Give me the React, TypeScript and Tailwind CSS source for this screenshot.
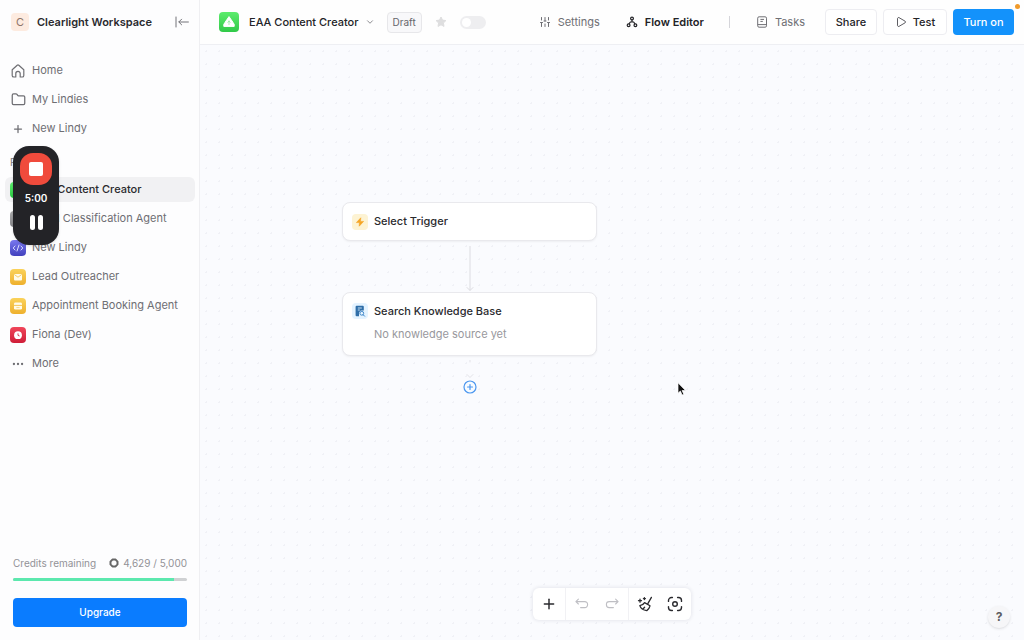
import type { ReactNode } from "react";
import { ChevronDown, Ellipsis, Folder, Play, Plus } from "lucide-react";

type Agent = { name: string; icon: ReactNode; tile: string; active?: boolean };

const agents: Agent[] = [
  {
    name: "EAA Content Creator",
    icon: <PyramidGlyph />,
    tile: "bg-linear-to-b from-[#5ff071] to-[#26c940]",
    active: true,
  },
  { name: "Email Classification Agent", icon: null, tile: "bg-linear-to-b from-[#a9a9ab] to-[#858588]" },
  { name: "New Lindy", icon: <CodeGlyph />, tile: "bg-linear-to-b from-[#7a78f0] to-[#4240bd]" },
  { name: "Lead Outreacher", icon: <MailGlyph />, tile: "bg-linear-to-b from-[#fad25a] to-[#eeb02c]" },
  {
    name: "Appointment Booking Agent",
    icon: <CalendarGlyph />,
    tile: "bg-linear-to-b from-[#fad25a] to-[#eeb02c]",
  },
  { name: "Fiona (Dev)", icon: <ClockGlyph />, tile: "bg-linear-to-b from-[#f0455a] to-[#cf1c38]" },
];

function PyramidGlyph() {
  return (
    <svg viewBox="0 0 20 20" className="size-full">
      <path d="M10 4.6 14 10.4 15.2 12.4V14.4H4.8V12.4L6 10.4Z" fill="#fff" stroke="#fff" strokeLinejoin="round" />
      <path d="M10 8.4v4.6M8.6 10.6 10 9l1.4 1.6" fill="none" stroke="#8eea99" strokeWidth="0.8" />
    </svg>
  );
}

function CodeGlyph() {
  return (
    <svg viewBox="0 0 16 16" className="size-full" fill="none" stroke="#dcdcff" strokeLinecap="round">
      <path d="M5 6 3.2 8 5 10M11 6l1.8 2L11 10M9 5l-2 6" />
    </svg>
  );
}

function MailGlyph() {
  return (
    <svg viewBox="0 0 16 16" className="size-full">
      <rect x="4" y="5" width="8" height="6.4" rx="1" fill="#fffbe9" />
      <path d="m4.4 5.6 3.6 2.6 3.6-2.6" fill="none" stroke="#f2bf45" strokeWidth="0.8" />
    </svg>
  );
}

function CalendarGlyph() {
  return (
    <svg viewBox="0 0 16 16" className="size-full">
      <rect x="4" y="4.6" width="8" height="7" rx="1.4" fill="#fffbe9" />
      <path d="M4 7.4h8" stroke="#f2bf45" strokeWidth="0.9" />
      <path d="M6.4 9.6h3.2" stroke="#f6cf6f" strokeWidth="0.8" />
    </svg>
  );
}

function ClockGlyph() {
  return (
    <svg viewBox="0 0 16 16" className="size-full">
      <circle cx="8" cy="8.2" r="3.9" fill="#fff" />
      <path d="M8 6.4v2l1.6.6" fill="none" stroke="#d42a45" strokeWidth="0.9" />
    </svg>
  );
}

function HomeIcon() {
  return (
    <svg viewBox="0 0 14 14" className="size-3.5" fill="none" stroke="currentColor" strokeWidth="1.2" strokeLinejoin="round">
      <path d="M1.2 5.8 6.2 1.3a1.2 1.2 0 0 1 1.6 0l5 4.5v5.6a1.6 1.6 0 0 1-1.6 1.6H9.2V9.6a2.2 2.2 0 0 0-4.4 0V13h-2a1.6 1.6 0 0 1-1.6-1.6Z" />
    </svg>
  );
}

function CollapseIcon() {
  return (
    <svg viewBox="0 0 14 12" className="h-3 w-3.5" fill="none" stroke="currentColor" strokeLinecap="round" strokeLinejoin="round">
      <path d="M1 1v10M13.4 6H4M6.6 3.2 3.8 6l2.8 2.8" />
    </svg>
  );
}

function CoinIcon() {
  return (
    <svg viewBox="0 0 10 10" className="size-2.5" fill="none">
      <path d="M3.4 1.6h3.2l1.9 2v2.8l-1.9 2H3.4l-1.9-2V3.600Z" stroke="#666" strokeWidth="2" strokeLinejoin="round" />
    </svg>
  );
}

function SlidersIcon() {
  return (
    <svg viewBox="0 0 12 12" className="size-3" fill="none" stroke="currentColor" strokeLinecap="round">
      <path d="M2.5 1.500v2.500M2.500 7v3.500M6 1.500V5M6 8v2.500M9.500 1.500V4M9.500 7v3.500M1.500 6.500h2M5 5h2M8.500 6.500h2" />
    </svg>
  );
}

function FlowIcon() {
  return (
    <svg viewBox="0 0 12 12" className="size-3" fill="none" stroke="currentColor" strokeWidth="1.2">
      <circle cx="6" cy="2.500" r="1.400" />
      <circle cx="2.600" cy="9.300" r="1.400" />
      <circle cx="9.400" cy="9.300" r="1.400" />
      <path d="M6 3.900v1.700M3 7.900 4.400 6h3.200L9 7.900" />
    </svg>
  );
}

function TasksIcon() {
  return (
    <svg viewBox="0 0 12 12" className="size-3" fill="none" stroke="currentColor">
      <rect x="1.7" y="0.8" width="8.8" height="10.4" rx="1.4" />
      <path d="M1.7 8.6h8.800M4.400 3.400h3.600M4.400 5.400h2.400" />
    </svg>
  );
}

function StarIcon() {
  return (
    <svg viewBox="0 0 12 12" className="size-3">
      <path
        d="m6 1 1.5 3.1 3.4.5-2.500 2.400.6 3.400L6 8.800l-3 1.600.6-3.400L1.100 4.600l3.400-.5Z"
        fill="#dededf"
        stroke="#dededf"
        strokeLinejoin="round"
      />
    </svg>
  );
}

function BoltIcon() {
  return (
    <svg viewBox="0 0 10 10" className="size-2.5">
      <path
        d="M5.800.8 1.400 5.600h3L4.200 9.200l4.400-4.800H5.500Z"
        fill="#f5a524"
        stroke="#f5a524"
        strokeWidth="0.6"
        strokeLinejoin="round"
      />
    </svg>
  );
}

function KnowledgeIcon() {
  return (
    <svg viewBox="0 0 12 12" className="size-3">
      <path
        d="M2.600.8h6.200a1 1 0 0 1 1 1v3.600H6.800L5 7.400v3.800H2.600a1 1 0 0 1-1-1V1.800a1 1 0 0 1 1-1Z"
        fill="#2f6ea8"
      />
      <path d="M3.800 3h4M3.800 5h2" stroke="#d6ebfb" strokeWidth="0.9" />
      <circle cx="7.800" cy="8.300" r="1.900" fill="#e8f5ff" stroke="#2f7dc4" strokeWidth="0.9" />
      <path d="m9.200 9.800 1.400 1.400" stroke="#2f7dc4" strokeLinecap="round" />
    </svg>
  );
}

function UndoIcon() {
  return (
    <svg viewBox="0 0 14 14" className="size-3.5" fill="none" stroke="currentColor" strokeWidth="1.1" strokeLinecap="round" strokeLinejoin="round">
      <path d="M3.400 2.200.9 4.600l2.500 2.400M1 4.600h8.800a2.800 2.800 0 0 1 2.800 2.800v.4a2.800 2.800 0 0 1-2.800 2.800H5.600" />
    </svg>
  );
}

function RedoIcon() {
  return (
    <svg viewBox="0 0 14 14" className="size-3.5" fill="none" stroke="currentColor" strokeWidth="1.1" strokeLinecap="round" strokeLinejoin="round">
      <path d="m10.600 2.200 2.500 2.400L10.600 7M13 4.600H4.200a2.800 2.800 0 0 0-2.800 2.800v.4a2.800 2.800 0 0 0 2.800 2.800h4.200" />
    </svg>
  );
}

function BroomIcon() {
  return (
    <svg viewBox="0 0 16 16" className="size-4" fill="none" stroke="currentColor" strokeWidth="1.3" strokeLinecap="round" strokeLinejoin="round">
      <path d="M14.400 1.400 11 7.400M7.600 6.600l5.400 3.200M7.600 6.600C6.400 8.600 4.600 9.400 2.800 9.600c.8 2.400 3.600 4.600 7 5 1.600-1 2.700-2.800 3.200-4.800M6 13l1.600-1.800" />
      <path d="M3 3.200v3M1.500 4.700h3M7.400 1.600v2M6.400 2.600h2" />
    </svg>
  );
}

function FocusIcon() {
  return (
    <svg viewBox="0 0 16 16" className="size-4" fill="none" stroke="currentColor" strokeWidth="1.4" strokeLinecap="round">
      <path d="M1.500 5.400V4.500a3 3 0 0 1 3-3h.9M10.600 1.500h.9a3 3 0 0 1 3 3v.9M14.500 10.600v.9a3 3 0 0 1-3 3h-.9M5.400 14.500h-.9a3 3 0 0 1-3-3v-.9" />
      <circle cx="8" cy="8" r="2.300" />
    </svg>
  );
}

function NavLink({ icon, label }: { icon: ReactNode; label: string }) {
  return (
    <a href="#" className="flex h-[25px] items-center gap-1.5 rounded px-[5px] text-[#6e6e73]">
      <span className="flex w-4 justify-center">{icon}</span>
      {label}
    </a>
  );
}

function Sidebar() {
  return (
    <aside className="flex w-[200px] shrink-0 flex-col border-r border-[#efeff2] bg-[#fdfdfe]">
      <div className="flex h-11 items-center gap-2 pr-2.5 pl-[11px]">
        <span className="flex size-[18px] items-center justify-center rounded bg-[#fdebe0] text-[11px] text-[#8d7468]">
          C
        </span>
        <span className="flex-1 text-[11px] font-semibold whitespace-nowrap text-[#2a2a2e]">Clearlight Workspace</span>
        <button aria-label="Collapse sidebar" className="text-[#737378]">
          <CollapseIcon />
        </button>
      </div>

      <nav className="mt-3.5 flex flex-col gap-1 pr-1 pl-[5px] text-[11px]">
        <NavLink icon={<HomeIcon />} label="Home" />
        <NavLink icon={<Folder className="size-[15px]" strokeWidth={2} />} label="My Lindies" />
        <NavLink icon={<Plus className="size-3" strokeWidth={2.5} />} label="New Lindy" />

        <h2 className="mt-1.5 flex h-[22px] items-center px-[5px] text-[10px] text-[#7d7d82]">Favorites</h2>
        {agents.map((a) => (
          <a
            key={a.name}
            href="#"
            className={
              a.active
                ? "flex h-[25px] items-center gap-1.5 rounded-md bg-[#f1f1f3] px-[5px] font-medium whitespace-nowrap text-[#2a2a2e]"
                : "flex h-[25px] items-center gap-1.5 rounded-md px-[5px] whitespace-nowrap text-[#6e6e73]"
            }
          >
            <span className={`size-4 shrink-0 overflow-hidden rounded ${a.tile}`}>{a.icon}</span>
            {a.name}
          </a>
        ))}
        <NavLink icon={<Ellipsis className="size-3.5" strokeWidth={2} />} label="More" />
      </nav>

      <div className="mt-auto pr-3 pb-[13px] pl-[13px]">
        <div className="flex items-center justify-between text-[10px] leading-4 text-[#929297]">
          <span>Credits remaining</span>
          <span className="flex items-center gap-1">
            <CoinIcon />
            4,629 / 5,000
          </span>
        </div>
        <div className="mt-[7px] h-[3px] overflow-hidden rounded-full bg-[#cfd1d3]">
          <div className="h-full bg-[#5ce8ae]" style={{ width: `${(4629 / 5000) * 100}%` }} />
        </div>
        <button className="mt-[17px] h-[29px] w-full rounded bg-[#0a7cff] text-[10px] font-medium text-white">
          Upgrade
        </button>
      </div>
    </aside>
  );
}

function Header() {
  return (
    <header className="flex h-[45px] items-center border-b border-[#eeeff3] bg-[#fefefe] pr-2.5 pl-[19px] text-[11px] whitespace-nowrap">
      <span className="size-5 shrink-0 overflow-hidden rounded bg-linear-to-b from-[#5cec6d] to-[#30c948]">
        <PyramidGlyph />
      </span>
      <button className="ml-2.5 flex items-center gap-1.5 font-medium text-[#232327]">
        EAA Content Creator
        <ChevronDown className="size-2.5 text-[#77777c]" />
      </button>
      <span className="ml-3 flex h-[21px] items-center rounded border border-[#e7e7ea] bg-[#f8f8fa] px-[5px] text-[10px] text-[#66666b]">
        Draft
      </span>
      <button aria-label="Favorite" className="ml-[13px]">
        <StarIcon />
      </button>
      <label className="ml-[13px] flex">
        <input type="checkbox" role="switch" aria-label="Enabled" className="peer sr-only" />
        <span className="flex h-[13px] w-[26px] items-center rounded-full bg-[#eeeef0] p-0.5">
          <span className="size-[9px] rounded-full bg-white" />
        </span>
      </label>

      <nav className="ml-auto flex items-center text-[#6f6f74]">
        <a href="#" className="flex items-center gap-[7px]">
          <SlidersIcon />
          Settings
        </a>
        <a href="#" className="ml-[26px] flex items-center gap-[7px] font-semibold text-[#232327]">
          <FlowIcon />
          Flow Editor
        </a>
        <span className="ml-[25px] h-3 w-px bg-[#d5d5da]" />
        <a href="#" className="ml-[26px] flex items-center gap-[7px]">
          <TasksIcon />
          Tasks
        </a>
      </nav>
      <div className="ml-5 flex gap-1.5 font-medium text-[#232327]">
        <button className="h-[26px] w-[52px] rounded border border-[#ededf1] bg-white">Share</button>
        <button className="flex h-[26px] w-16 items-center justify-center gap-1.5 rounded border border-[#ededf1] bg-white">
          <Play className="size-3 text-[#4b4b50]" strokeWidth={1.8} />
          Test
        </button>
        <button className="h-[26px] w-[61px] rounded bg-[#1392fb] text-white">Turn on</button>
      </div>
    </header>
  );
}

function FlowCanvas() {
  return (
    <main className="relative flex-1 overflow-hidden bg-[#fafbfe] bg-[radial-gradient(circle,#f0f1f6_1px,transparent_1px)] bg-size-[13px_13px]">
      {/* flow nodes, placed on the free canvas */}
      <div className="absolute top-[157px] left-[142px] flex w-[255px] flex-col items-center">
        <section className="flex h-[39px] w-full items-center gap-1.5 rounded-lg border border-[#e9e9ed] bg-white px-[9px] shadow-xs">
          <span className="flex size-4 items-center justify-center rounded bg-[#fdf3d3]">
            <BoltIcon />
          </span>
          <h3 className="text-[11px] font-medium text-[#2a2a2e]">Select Trigger</h3>
        </section>

        <svg viewBox="0 0 10 46" className="mt-[5px] h-[46px] w-2.5" fill="none" stroke="#dcdce1" strokeLinecap="round">
          <path d="M5 0v44M2 41.500l3 3 3-3" />
        </svg>

        <section className="h-16 w-full rounded-lg border border-[#e9e9ed] bg-white px-[9px] pt-2.5 shadow-xs">
          <div className="flex h-4 items-center gap-1.5">
            <span className="flex size-4 items-center justify-center rounded bg-[#e4f3ff]">
              <KnowledgeIcon />
            </span>
            <h3 className="text-[11px] font-medium text-[#2a2a2e]">Search Knowledge Base</h3>
          </div>
          <p className="mt-[7px] pl-[22px] text-[11px] leading-4 text-[#98989d]">No knowledge source yet</p>
        </section>

        <svg viewBox="0 0 10 20" className="mt-1 h-5 w-2.5" fill="none" stroke="#e3e3e8" strokeLinecap="round">
          <path d="M5 0v2M2 14.500l3 3 3-3" />
        </svg>
        <button aria-label="Add step" className="text-[#4a96ef]">
          <svg viewBox="0 0 14 14" className="size-3.5" fill="#f7fbff" stroke="currentColor" strokeWidth="1.2">
            <circle cx="7" cy="7" r="6" />
            <path d="M7 4.500v5M4.500 7h5" strokeLinecap="round" />
          </svg>
        </button>
      </div>

      <div className="absolute bottom-5 left-[333px] flex h-8 items-center rounded-md bg-white text-[#2a2a2e] shadow-[0_0_4px_rgba(30,30,60,0.13)]">
        <button aria-label="Add" className="flex h-full w-[33px] items-center justify-center border-r border-[#f1f1f4]">
          <Plus className="size-4" strokeWidth={2.2} />
        </button>
        <div className="flex h-full items-center gap-4 border-r border-[#f1f1f4] px-[9px] text-[#bfbfc4]">
          <button aria-label="Undo">
            <UndoIcon />
          </button>
          <button aria-label="Redo">
            <RedoIcon />
          </button>
        </div>
        <div className="flex h-full items-center gap-3.5 px-2">
          <button aria-label="Tidy up">
            <BroomIcon />
          </button>
          <button aria-label="Fit to view">
            <FocusIcon />
          </button>
        </div>
      </div>

      <button className="absolute right-3.5 bottom-3 size-[22px] rounded-full bg-[#f6f6f8] text-[12px] font-bold text-[#5c5c61] shadow-sm">
        ?
      </button>

      <svg viewBox="0 0 10 14" className="absolute top-[337px] left-[477px] h-3.5 w-2.5">
        <path d="M1 .8v10.400l2.400-2.200 1.700 4 1.700-.8-1.700-3.700h3.400Z" fill="#111" stroke="#fff" strokeWidth="0.7" />
      </svg>
    </main>
  );
}

// Floating screen-recorder control, always above the page
function RecorderWidget() {
  return (
    <div className="absolute top-[146px] left-[13px] flex h-[99px] w-[46px] flex-col items-center rounded-2xl bg-[#232327] pt-[7px] text-white shadow-sm">
      <button aria-label="Stop recording" className="flex size-8 items-center justify-center rounded-[13px] bg-[#f04b3c]">
        <span className="size-3.5 rounded-xs bg-white" />
      </button>
      <span className="mt-[5px] text-[10px] leading-4 font-semibold">5:00</span>
      <button aria-label="Pause recording" className="mt-[9px] flex gap-[3px]">
        <span className="h-[15px] w-[5px] rounded-full bg-white" />
        <span className="h-[15px] w-[5px] rounded-full bg-white" />
      </button>
    </div>
  );
}

export default function App() {
  return (
    <div className="relative flex min-h-screen overflow-hidden font-[Inter,sans-serif]">
      <Sidebar />
      <div className="flex min-w-0 flex-1 flex-col">
        <Header />
        <FlowCanvas />
      </div>
      <RecorderWidget />
      <span className="absolute top-1 right-1 size-[5px] rounded-full bg-[#f09a2a]" />
    </div>
  );
}
